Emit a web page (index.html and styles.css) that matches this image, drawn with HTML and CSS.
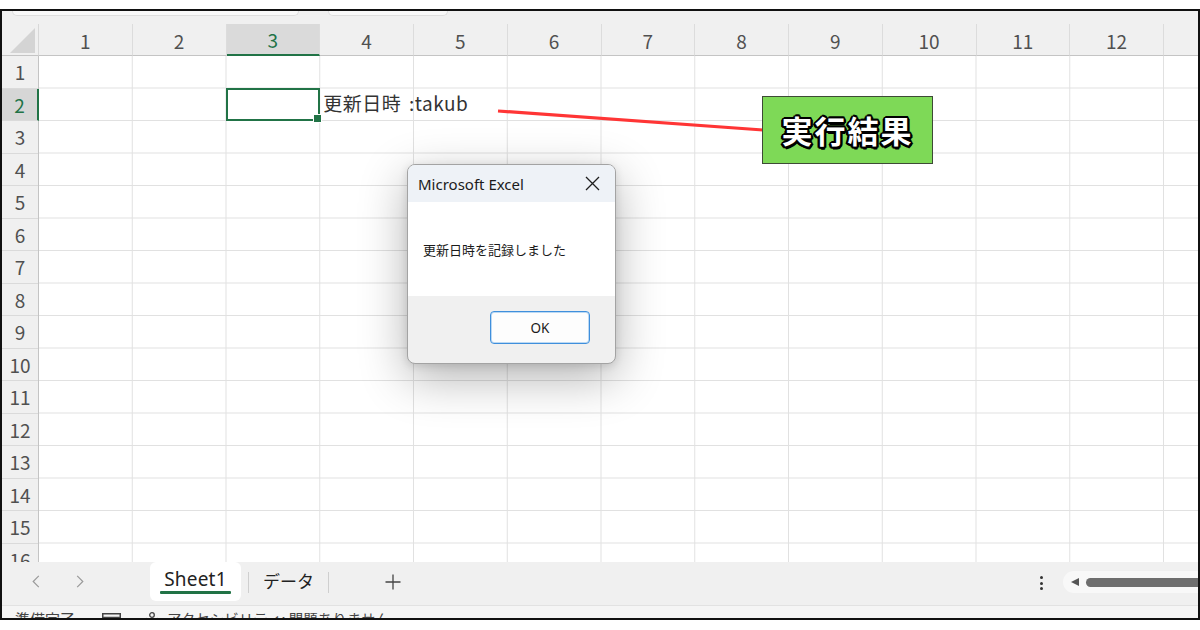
FILE: index.html
```html
<!DOCTYPE html>
<html lang="ja">
<head>
<meta charset="utf-8">
<title>Excel</title>
<link rel="stylesheet" href="styles.css">
</head>
<body>
<div class="frame">
  <div class="topstrip">
    <div class="fbox fbox-a"></div>
    <div class="fbox fbox-b"></div>
  </div>
  <div class="colhead">
    <div class="corner"><div class="tri"></div></div>
    <div class="ch">1</div>
    <div class="ch">2</div>
    <div class="ch ch-sel">3</div>
    <div class="ch">4</div>
    <div class="ch">5</div>
    <div class="ch">6</div>
    <div class="ch">7</div>
    <div class="ch">8</div>
    <div class="ch">9</div>
    <div class="ch">10</div>
    <div class="ch">11</div>
    <div class="ch">12</div>
    <div class="ch"></div>
  </div>
  <div class="sheet">
    <div class="rowhead">
      <div class="rh">1</div>
      <div class="rh rh-sel">2</div>
      <div class="rh">3</div>
      <div class="rh">4</div>
      <div class="rh">5</div>
      <div class="rh">6</div>
      <div class="rh">7</div>
      <div class="rh">8</div>
      <div class="rh">9</div>
      <div class="rh">10</div>
      <div class="rh">11</div>
      <div class="rh">12</div>
      <div class="rh">13</div>
      <div class="rh">14</div>
      <div class="rh">15</div>
      <div class="rh">16</div>
    </div>
    <div class="cells">
      <div class="selcell"></div>
      <div class="celltext">更新日時 :takub</div>
    </div>
  </div>
  <div class="tabbar">
    <div class="nav">
      <svg class="chev" width="8" height="13" viewBox="0 0 8 13"><path d="M6.8 0.8 L1.2 6.5 L6.8 12.2" fill="none" stroke="#9a9a9a" stroke-width="1.2"/></svg>
      <svg class="chev chev-r" width="8" height="13" viewBox="0 0 8 13"><path d="M1.2 0.8 L6.8 6.5 L1.2 12.2" fill="none" stroke="#9a9a9a" stroke-width="1.2"/></svg>
    </div>
    <div class="tab tab-active">
      <span class="tabname tabname-latin">Sheet1</span>
      <span class="uline"></span>
    </div>
    <div class="sep"></div>
    <div class="tab tab-2"><span class="tabname">データ</span></div>
    <div class="sep"></div>
    <div class="add">
      <svg width="16" height="16" viewBox="0 0 16 16"><path d="M8 0.5 V15.5 M0.5 8 H15.5" stroke="#444" stroke-width="1.3" fill="none"/></svg>
    </div>
    <div class="dots"><span></span><span></span><span></span></div>
    <div class="track">
      <span class="arrow"></span>
      <span class="thumb"></span>
    </div>
  </div>
  <div class="status">
    <span class="st-ready">準備完了</span>
    <svg class="st-icon" width="19" height="16" viewBox="0 0 19 16"><rect x="0.75" y="0.75" width="17.5" height="14.5" fill="none" stroke="#444" stroke-width="1.5"/><path d="M0.75 4.5 H18.25" stroke="#444" stroke-width="1.5"/></svg>
    <svg class="st-acc" width="14" height="16" viewBox="0 0 14 16"><circle cx="7" cy="3" r="2.3" fill="none" stroke="#444" stroke-width="1.3"/><path d="M1 6.5 Q7 8 13 6.5" fill="none" stroke="#444" stroke-width="1.3"/></svg>
    <span class="st-text">アクセシビリティ: 問題ありません</span>
  </div>

  <svg class="arrowline" width="1196" height="607" viewBox="0 0 1196 607">
    <line x1="496" y1="100" x2="761" y2="119" stroke="#ff3535" stroke-width="3.2"/>
  </svg>
  <div class="label">実行結果</div>

  <div class="dialog">
    <div class="dlg-title">
      <span>Microsoft Excel</span>
      <svg class="close" width="15" height="15" viewBox="0 0 15 15"><path d="M1 1 L14 14 M14 1 L1 14" stroke="#1f1f1f" stroke-width="1.3" fill="none"/></svg>
    </div>
    <div class="dlg-body">更新日時を記録しました</div>
    <div class="dlg-foot"><div class="okbtn">OK</div></div>
  </div>
</div>
</body>
</html>
```
FILE: styles.css
```css
* { box-sizing: border-box; }
html, body { margin: 0; padding: 0; background: #ffffff; }
body { font-family: "Noto Sans CJK JP", "Noto Sans", sans-serif; color: #262626; }

.frame {
  position: relative;
  margin-top: 9px;
  width: 1200px;
  height: 611px;
  border: 2px solid #111111;
  overflow: hidden;
  background: #f0f0f0;
  display: flex;
  flex-direction: column;
}

/* formula bar remnants */
.topstrip { height: 13px; flex: none; display: flex; gap: 29px; padding-left: 10px; }
.fbox { height: 5px; background: #f9f9f9; border: 1px solid #dedede; border-top: none; border-radius: 0 0 7px 7px; }
.fbox-a { width: 287px; }
.fbox-b { width: 120px; }

/* column header */
.colhead { height: 32px; flex: none; display: flex; }
.corner {
  width: 37px; flex: none;
  border-right: 1px solid #d8d8d8;
  border-bottom: 1px solid #c4c4c4;
  padding: 4px 3px 3px 8px;
}
.tri { width: 25px; height: 25px; background: #d4d4d4; clip-path: polygon(100% 0, 100% 100%, 0 100%); }
.ch {
  width: 93.75px; flex: none;
  border-right: 1px solid #dcdcdc;
  border-bottom: 1px solid #c4c4c4;
  display: flex; align-items: center; justify-content: center;
  font-size: 19px; color: #505050;
  padding-top: 1px;
}
.ch-sel { background: #dadada; color: #217346; border-bottom: 2px solid #217346; }

/* sheet */
.sheet { height: 506px; flex: none; display: flex; background: #ffffff; }
.rowhead {
  width: 37px; flex: none;
  background: #f0f0f0;
  border-right: 1px solid #c4c4c4;
  display: flex; flex-direction: column;
}
.rh {
  height: 32.5px; flex: none;
  border-bottom: 1px solid #dadada;
  display: flex; align-items: center; justify-content: center;
  font-size: 19px; color: #505050;
}
.rh-sel { background: #d6d6d6; color: #217346; border-right: 2px solid #217346; margin-right: -1px; }

.cells {
  flex: none;
  width: 1219px;
  display: grid;
  grid-template-columns: repeat(13, 93.75px);
  grid-template-rows: repeat(16, 32.5px);
  background-color: #ffffff;
  background-image:
    linear-gradient(to left, #e1e1e1 1px, transparent 1px),
    linear-gradient(to top, #e1e1e1 1px, transparent 1px);
  background-size: 93.75px 32.5px, 93.75px 32.5px;
}
.selcell {
  grid-column: 3; grid-row: 2;
  margin: -1px 0 0 -1px;
  border: 2px solid #217346;
  position: relative;
}
.selcell::after {
  content: "";
  position: absolute;
  right: -4px; bottom: -4px;
  width: 7px; height: 7px;
  background: #217346;
  border: 1px solid #ffffff;
}
.celltext {
  grid-column: 4 / span 4; grid-row: 2;
  align-self: center;
  padding-left: 3px;
  font-size: 19px;
  line-height: 24px;
  color: #333333;
  white-space: nowrap;
  margin-top: -3px;
  letter-spacing: 0.5px;
  word-spacing: 3px;
}

/* sheet tabs */
.tabbar { height: 43px; flex: none; display: flex; align-items: flex-start; background: #f0f0f0; }
.nav { width: 148px; flex: none; height: 38px; display: flex; align-items: center; padding-left: 30px; }
.chev-r { margin-left: 36px; }
.tab {
  flex: none; height: 39px;
  display: flex; flex-direction: column; align-items: center;
  padding-top: 7px;
}
.tab-active { width: 91px; background: #ffffff; border-radius: 6px; }
.tab-2 { width: 79px; padding-top: 8px; }
.tabname { font-size: 17px; line-height: 21px; color: #222; }
.tabname-latin { font-family: "Noto Sans", "Open Sans", sans-serif; font-size: 19px; letter-spacing: 0.2px; }
.uline { width: 71px; height: 3px; background: #217346; margin-top: 1px; border-radius: 1px; }
.sep { width: 1px; height: 21px; background: #cfcfcf; margin-top: 10px; flex: none; }
.tab-active + .sep { margin-left: 7px; }
.add { width: 128px; flex: none; height: 40px; display: flex; align-items: center; justify-content: center; }
.dots {
  margin-left: auto; flex: none;
  width: 10px; height: 40px;
  display: flex; flex-direction: column; align-items: center; justify-content: center; gap: 2.5px;
  padding-top: 2px;
}
.dots span { width: 3px; height: 3px; border-radius: 50%; background: #333; }
.track {
  flex: none;
  width: 160px; height: 22px;
  margin-left: 17px; margin-right: -25px; margin-top: 9px;
  border-radius: 11px;
  background: #f8f8f8;
  display: flex; align-items: center;
  padding-left: 8px;
}
.arrow { width: 0; height: 0; border-top: 4.5px solid transparent; border-bottom: 4.5px solid transparent; border-right: 8px solid #555; }
.thumb { flex: 1; height: 9px; margin-left: 7px; background: #6e6e6e; border-radius: 4.5px; }

/* status bar */
.status {
  flex: 1;
  background: #f5f5f5;
  border-top: 1px solid #e2e2e2;
  display: flex; align-items: flex-start;
  padding-top: 5px; padding-left: 13px;
  font-size: 15px; line-height: 16px; color: #444;
  white-space: nowrap;
}
.st-icon { margin-left: 27px; margin-top: 2px; flex: none; }
.st-acc { margin-left: 24px; margin-top: 1px; flex: none; }
.st-text { margin-left: 8px; font-size: 14.5px; }

/* overlays */
.arrowline { position: absolute; left: 0; top: 0; pointer-events: none; }
.label {
  position: absolute; left: 760px; top: 85px;
  width: 171px; height: 68px;
  background: #7ed957;
  border: 1px solid #3d4a36;
  display: flex; align-items: center; justify-content: center;
  font-size: 31px; font-weight: 700; color: #ffffff;
  letter-spacing: 2px;
  padding-bottom: 2px;
  text-shadow:
    2px 0 0 #000, -2px 0 0 #000, 0 2px 0 #000, 0 -2px 0 #000,
    1.5px 1.5px 0 #000, -1.5px 1.5px 0 #000, 1.5px -1.5px 0 #000, -1.5px -1.5px 0 #000,
    2.5px 1px 0 #000, -2.5px 1px 0 #000, 1px 2.5px 0 #000, 1px -2.5px 0 #000;
}

.dialog {
  position: absolute; left: 405px; top: 153px;
  width: 209px; height: 200px;
  border: 1px solid #a3a3a3;
  border-radius: 8px;
  overflow: hidden;
  background: #f0f0f0;
  box-shadow: 0 14px 48px rgba(0,0,0,0.3), 0 2px 8px rgba(0,0,0,0.12);
  display: flex; flex-direction: column;
}
.dlg-title {
  height: 37px; flex: none;
  background: #eef2f7;
  display: flex; align-items: center; justify-content: space-between;
  padding: 0 15px 0 10px;
  font-family: "Noto Sans", "Open Sans", sans-serif;
  font-size: 15px; color: #1b1b1b;
}
.close { flex: none; margin-top: -1px; }
.dlg-body {
  height: 94px; flex: none;
  background: #ffffff;
  padding: 38px 0 0 15px;
  font-size: 13px; line-height: 20px; color: #1b1b1b;
}
.dlg-foot { flex: 1; display: flex; justify-content: flex-end; padding: 15px 25px 0 0; }
.okbtn {
  width: 100px; height: 33px;
  border: 1px solid #3f8fdc;
  box-shadow: inset 0 0 0 1px #bcd9f3;
  border-radius: 4px;
  background: #fdfdfd;
  display: flex; align-items: center; justify-content: center;
  font-family: "Noto Sans", "Open Sans", sans-serif;
  font-size: 13.5px; color: #1b1b1b;
}
```
